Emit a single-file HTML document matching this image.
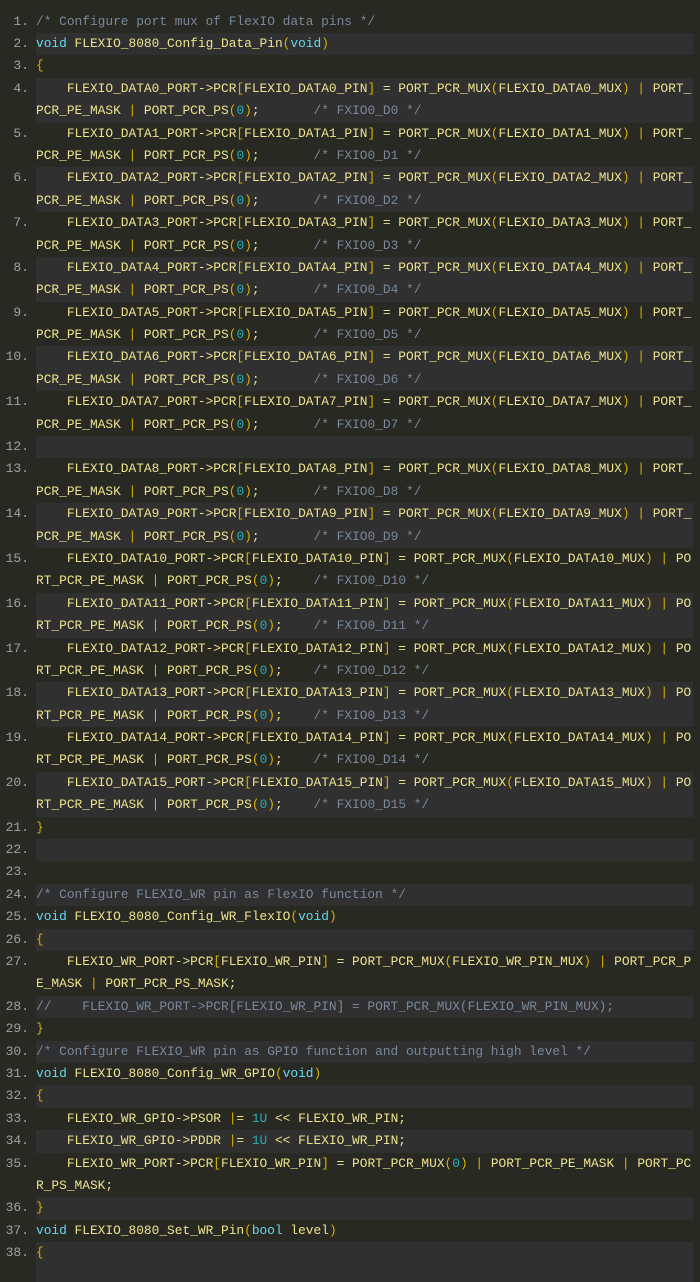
<!DOCTYPE html>
<html><head><meta charset="utf-8"><style>
html,body{margin:0;padding:0;background:#282923;width:700px;height:1264px;overflow:hidden}
.w{position:absolute;left:0;top:10.6px;width:700px}
.r{position:relative;height:22.4px;line-height:22.4px;font-family:"Liberation Mono",monospace;font-size:12.85px;color:#ece38e;white-space:pre}
.s{background:#303030;margin-left:36px;width:657px}
.r .t{position:absolute;left:36px;top:0}
.s .t{left:0}
.ln{position:absolute;left:0;width:29px;text-align:right;color:#a0a0a0;font-size:13px;top:0}
.s .ln{left:-36px}
.c{color:#7a8899}.k{color:#66d9ef}.p{color:#d6b000}.n{color:#26b0b0}
</style></head><body><div class="w">
<div class="r"><span class="ln">1.</span><span class="t"><span class="c">/* Configure port mux of FlexIO data pins */</span></span></div>
<div class="r s"><span class="ln">2.</span><span class="t"><span class="k">void</span> FLEXIO_8080_Config_Data_Pin<span class="p">(</span><span class="k">void</span><span class="p">)</span></span></div>
<div class="r"><span class="ln">3.</span><span class="t"><span class="p">{</span></span></div>
<div class="r s"><span class="ln">4.</span><span class="t">    FLEXIO_DATA0_PORT-&gt;PCR<span class="p">[</span>FLEXIO_DATA0_PIN<span class="p">]</span> = PORT_PCR_MUX<span class="p">(</span>FLEXIO_DATA0_MUX<span class="p">)</span> <span class="p">|</span> PORT_</span></div>
<div class="r s"><span class="t">PCR_PE_MASK <span class="p">|</span> PORT_PCR_PS<span class="p">(</span><span class="n">0</span><span class="p">)</span>;       <span class="c">/* FXIO0_D0 */</span></span></div>
<div class="r"><span class="ln">5.</span><span class="t">    FLEXIO_DATA1_PORT-&gt;PCR<span class="p">[</span>FLEXIO_DATA1_PIN<span class="p">]</span> = PORT_PCR_MUX<span class="p">(</span>FLEXIO_DATA1_MUX<span class="p">)</span> <span class="p">|</span> PORT_</span></div>
<div class="r"><span class="t">PCR_PE_MASK <span class="p">|</span> PORT_PCR_PS<span class="p">(</span><span class="n">0</span><span class="p">)</span>;       <span class="c">/* FXIO0_D1 */</span></span></div>
<div class="r s"><span class="ln">6.</span><span class="t">    FLEXIO_DATA2_PORT-&gt;PCR<span class="p">[</span>FLEXIO_DATA2_PIN<span class="p">]</span> = PORT_PCR_MUX<span class="p">(</span>FLEXIO_DATA2_MUX<span class="p">)</span> <span class="p">|</span> PORT_</span></div>
<div class="r s"><span class="t">PCR_PE_MASK <span class="p">|</span> PORT_PCR_PS<span class="p">(</span><span class="n">0</span><span class="p">)</span>;       <span class="c">/* FXIO0_D2 */</span></span></div>
<div class="r"><span class="ln">7.</span><span class="t">    FLEXIO_DATA3_PORT-&gt;PCR<span class="p">[</span>FLEXIO_DATA3_PIN<span class="p">]</span> = PORT_PCR_MUX<span class="p">(</span>FLEXIO_DATA3_MUX<span class="p">)</span> <span class="p">|</span> PORT_</span></div>
<div class="r"><span class="t">PCR_PE_MASK <span class="p">|</span> PORT_PCR_PS<span class="p">(</span><span class="n">0</span><span class="p">)</span>;       <span class="c">/* FXIO0_D3 */</span></span></div>
<div class="r s"><span class="ln">8.</span><span class="t">    FLEXIO_DATA4_PORT-&gt;PCR<span class="p">[</span>FLEXIO_DATA4_PIN<span class="p">]</span> = PORT_PCR_MUX<span class="p">(</span>FLEXIO_DATA4_MUX<span class="p">)</span> <span class="p">|</span> PORT_</span></div>
<div class="r s"><span class="t">PCR_PE_MASK <span class="p">|</span> PORT_PCR_PS<span class="p">(</span><span class="n">0</span><span class="p">)</span>;       <span class="c">/* FXIO0_D4 */</span></span></div>
<div class="r"><span class="ln">9.</span><span class="t">    FLEXIO_DATA5_PORT-&gt;PCR<span class="p">[</span>FLEXIO_DATA5_PIN<span class="p">]</span> = PORT_PCR_MUX<span class="p">(</span>FLEXIO_DATA5_MUX<span class="p">)</span> <span class="p">|</span> PORT_</span></div>
<div class="r"><span class="t">PCR_PE_MASK <span class="p">|</span> PORT_PCR_PS<span class="p">(</span><span class="n">0</span><span class="p">)</span>;       <span class="c">/* FXIO0_D5 */</span></span></div>
<div class="r s"><span class="ln">10.</span><span class="t">    FLEXIO_DATA6_PORT-&gt;PCR<span class="p">[</span>FLEXIO_DATA6_PIN<span class="p">]</span> = PORT_PCR_MUX<span class="p">(</span>FLEXIO_DATA6_MUX<span class="p">)</span> <span class="p">|</span> PORT_</span></div>
<div class="r s"><span class="t">PCR_PE_MASK <span class="p">|</span> PORT_PCR_PS<span class="p">(</span><span class="n">0</span><span class="p">)</span>;       <span class="c">/* FXIO0_D6 */</span></span></div>
<div class="r"><span class="ln">11.</span><span class="t">    FLEXIO_DATA7_PORT-&gt;PCR<span class="p">[</span>FLEXIO_DATA7_PIN<span class="p">]</span> = PORT_PCR_MUX<span class="p">(</span>FLEXIO_DATA7_MUX<span class="p">)</span> <span class="p">|</span> PORT_</span></div>
<div class="r"><span class="t">PCR_PE_MASK <span class="p">|</span> PORT_PCR_PS<span class="p">(</span><span class="n">0</span><span class="p">)</span>;       <span class="c">/* FXIO0_D7 */</span></span></div>
<div class="r s"><span class="ln">12.</span><span class="t"> </span></div>
<div class="r"><span class="ln">13.</span><span class="t">    FLEXIO_DATA8_PORT-&gt;PCR<span class="p">[</span>FLEXIO_DATA8_PIN<span class="p">]</span> = PORT_PCR_MUX<span class="p">(</span>FLEXIO_DATA8_MUX<span class="p">)</span> <span class="p">|</span> PORT_</span></div>
<div class="r"><span class="t">PCR_PE_MASK <span class="p">|</span> PORT_PCR_PS<span class="p">(</span><span class="n">0</span><span class="p">)</span>;       <span class="c">/* FXIO0_D8 */</span></span></div>
<div class="r s"><span class="ln">14.</span><span class="t">    FLEXIO_DATA9_PORT-&gt;PCR<span class="p">[</span>FLEXIO_DATA9_PIN<span class="p">]</span> = PORT_PCR_MUX<span class="p">(</span>FLEXIO_DATA9_MUX<span class="p">)</span> <span class="p">|</span> PORT_</span></div>
<div class="r s"><span class="t">PCR_PE_MASK <span class="p">|</span> PORT_PCR_PS<span class="p">(</span><span class="n">0</span><span class="p">)</span>;       <span class="c">/* FXIO0_D9 */</span></span></div>
<div class="r"><span class="ln">15.</span><span class="t">    FLEXIO_DATA10_PORT-&gt;PCR<span class="p">[</span>FLEXIO_DATA10_PIN<span class="p">]</span> = PORT_PCR_MUX<span class="p">(</span>FLEXIO_DATA10_MUX<span class="p">)</span> <span class="p">|</span> PO</span></div>
<div class="r"><span class="t">RT_PCR_PE_MASK <span class="p">|</span> PORT_PCR_PS<span class="p">(</span><span class="n">0</span><span class="p">)</span>;    <span class="c">/* FXIO0_D10 */</span></span></div>
<div class="r s"><span class="ln">16.</span><span class="t">    FLEXIO_DATA11_PORT-&gt;PCR<span class="p">[</span>FLEXIO_DATA11_PIN<span class="p">]</span> = PORT_PCR_MUX<span class="p">(</span>FLEXIO_DATA11_MUX<span class="p">)</span> <span class="p">|</span> PO</span></div>
<div class="r s"><span class="t">RT_PCR_PE_MASK <span class="p">|</span> PORT_PCR_PS<span class="p">(</span><span class="n">0</span><span class="p">)</span>;    <span class="c">/* FXIO0_D11 */</span></span></div>
<div class="r"><span class="ln">17.</span><span class="t">    FLEXIO_DATA12_PORT-&gt;PCR<span class="p">[</span>FLEXIO_DATA12_PIN<span class="p">]</span> = PORT_PCR_MUX<span class="p">(</span>FLEXIO_DATA12_MUX<span class="p">)</span> <span class="p">|</span> PO</span></div>
<div class="r"><span class="t">RT_PCR_PE_MASK <span class="p">|</span> PORT_PCR_PS<span class="p">(</span><span class="n">0</span><span class="p">)</span>;    <span class="c">/* FXIO0_D12 */</span></span></div>
<div class="r s"><span class="ln">18.</span><span class="t">    FLEXIO_DATA13_PORT-&gt;PCR<span class="p">[</span>FLEXIO_DATA13_PIN<span class="p">]</span> = PORT_PCR_MUX<span class="p">(</span>FLEXIO_DATA13_MUX<span class="p">)</span> <span class="p">|</span> PO</span></div>
<div class="r s"><span class="t">RT_PCR_PE_MASK <span class="p">|</span> PORT_PCR_PS<span class="p">(</span><span class="n">0</span><span class="p">)</span>;    <span class="c">/* FXIO0_D13 */</span></span></div>
<div class="r"><span class="ln">19.</span><span class="t">    FLEXIO_DATA14_PORT-&gt;PCR<span class="p">[</span>FLEXIO_DATA14_PIN<span class="p">]</span> = PORT_PCR_MUX<span class="p">(</span>FLEXIO_DATA14_MUX<span class="p">)</span> <span class="p">|</span> PO</span></div>
<div class="r"><span class="t">RT_PCR_PE_MASK <span class="p">|</span> PORT_PCR_PS<span class="p">(</span><span class="n">0</span><span class="p">)</span>;    <span class="c">/* FXIO0_D14 */</span></span></div>
<div class="r s"><span class="ln">20.</span><span class="t">    FLEXIO_DATA15_PORT-&gt;PCR<span class="p">[</span>FLEXIO_DATA15_PIN<span class="p">]</span> = PORT_PCR_MUX<span class="p">(</span>FLEXIO_DATA15_MUX<span class="p">)</span> <span class="p">|</span> PO</span></div>
<div class="r s"><span class="t">RT_PCR_PE_MASK <span class="p">|</span> PORT_PCR_PS<span class="p">(</span><span class="n">0</span><span class="p">)</span>;    <span class="c">/* FXIO0_D15 */</span></span></div>
<div class="r"><span class="ln">21.</span><span class="t"><span class="p">}</span></span></div>
<div class="r s"><span class="ln">22.</span><span class="t"> </span></div>
<div class="r"><span class="ln">23.</span><span class="t"> </span></div>
<div class="r s"><span class="ln">24.</span><span class="t"><span class="c">/* Configure FLEXIO_WR pin as FlexIO function */</span></span></div>
<div class="r"><span class="ln">25.</span><span class="t"><span class="k">void</span> FLEXIO_8080_Config_WR_FlexIO<span class="p">(</span><span class="k">void</span><span class="p">)</span></span></div>
<div class="r s"><span class="ln">26.</span><span class="t"><span class="p">{</span></span></div>
<div class="r"><span class="ln">27.</span><span class="t">    FLEXIO_WR_PORT-&gt;PCR<span class="p">[</span>FLEXIO_WR_PIN<span class="p">]</span> = PORT_PCR_MUX<span class="p">(</span>FLEXIO_WR_PIN_MUX<span class="p">)</span> <span class="p">|</span> PORT_PCR_P</span></div>
<div class="r"><span class="t">E_MASK <span class="p">|</span> PORT_PCR_PS_MASK;</span></div>
<div class="r s"><span class="ln">28.</span><span class="t"><span class="c">//    FLEXIO_WR_PORT-&gt;PCR[FLEXIO_WR_PIN] = PORT_PCR_MUX(FLEXIO_WR_PIN_MUX);</span></span></div>
<div class="r"><span class="ln">29.</span><span class="t"><span class="p">}</span></span></div>
<div class="r s"><span class="ln">30.</span><span class="t"><span class="c">/* Configure FLEXIO_WR pin as GPIO function and outputting high level */</span></span></div>
<div class="r"><span class="ln">31.</span><span class="t"><span class="k">void</span> FLEXIO_8080_Config_WR_GPIO<span class="p">(</span><span class="k">void</span><span class="p">)</span></span></div>
<div class="r s"><span class="ln">32.</span><span class="t"><span class="p">{</span></span></div>
<div class="r"><span class="ln">33.</span><span class="t">    FLEXIO_WR_GPIO-&gt;PSOR <span class="p">|</span>= <span class="n">1U</span> &lt;&lt; FLEXIO_WR_PIN;</span></div>
<div class="r s"><span class="ln">34.</span><span class="t">    FLEXIO_WR_GPIO-&gt;PDDR <span class="p">|</span>= <span class="n">1U</span> &lt;&lt; FLEXIO_WR_PIN;</span></div>
<div class="r"><span class="ln">35.</span><span class="t">    FLEXIO_WR_PORT-&gt;PCR<span class="p">[</span>FLEXIO_WR_PIN<span class="p">]</span> = PORT_PCR_MUX<span class="p">(</span><span class="n">0</span><span class="p">)</span> <span class="p">|</span> PORT_PCR_PE_MASK <span class="p">|</span> PORT_PC</span></div>
<div class="r"><span class="t">R_PS_MASK;</span></div>
<div class="r s"><span class="ln">36.</span><span class="t"><span class="p">}</span></span></div>
<div class="r"><span class="ln">37.</span><span class="t"><span class="k">void</span> FLEXIO_8080_Set_WR_Pin<span class="p">(</span><span class="k">bool</span> level<span class="p">)</span></span></div>
<div class="r s" style="height:40px"><span class="ln">38.</span><span class="t"><span class="p">{</span></span></div>
</div></body></html>
